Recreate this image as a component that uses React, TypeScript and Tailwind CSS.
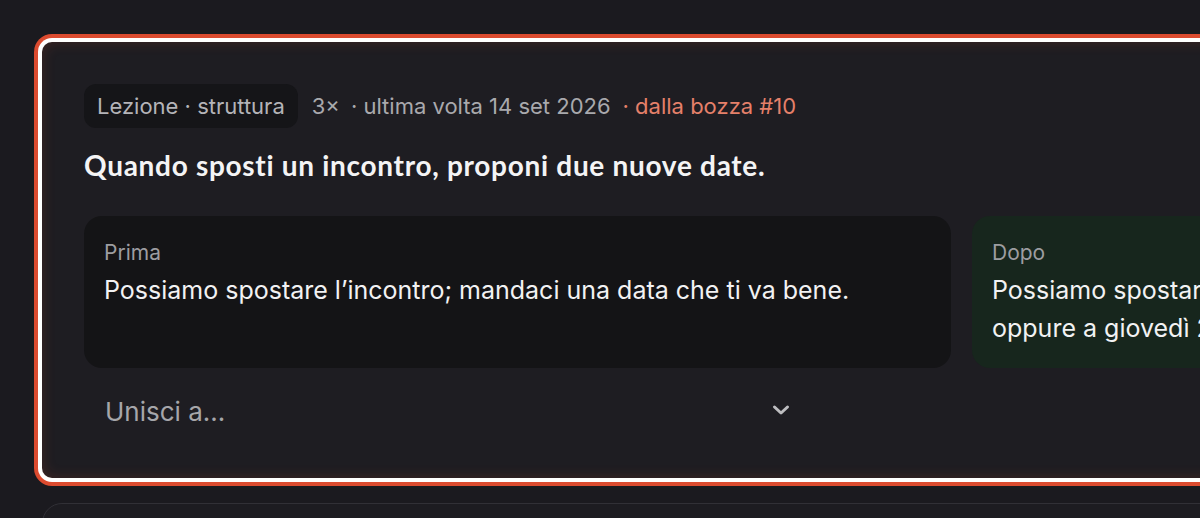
import React from 'react';

// Lesson card: focused, with before/after comparison and merge select
const LessonCard: React.FC = () => {
  return (
    <div className="w-[1839px] rounded-[10px] bg-[#1e1d22] px-[42px] pt-[42px] pb-[39px] shadow-[0_0_0_4px_#ffffff,0_0_0_8px_#dc4b2f,inset_0_0_14px_rgba(220,75,47,0.18)]">
      {/* Meta row */}
      <div className="flex items-center h-[44px] text-[22px] text-[#a9a9ad]">
        <span className="flex items-center h-[44px] px-[13px] rounded-[12px] bg-[#151518] text-[#b4b4b8]">
          Lezione · struttura
        </span>
        <span className="ml-[14px]">3×</span>
        <span className="ml-[11px]">· ultima volta 14 set 2026</span>
        <span className="ml-[12px] text-[#e5806a]">· dalla bozza #10</span>
      </div>

      {/* Lesson */}
      <h2 className="mt-[18px] text-[28px] leading-[38px] tracking-[0.7px] font-bold text-[#f4f4f5] font-['Lato',sans-serif]">
        Quando sposti un incontro, proponi due nuove date.
      </h2>

      {/* Before / after */}
      <div className="mt-[32px] grid grid-cols-2 gap-[21px]">
        <div className="rounded-[18px] bg-[#141416] px-[20px] pt-[22px] pb-[21px]">
          <div className="text-[21px] leading-[30px] text-[#9d9da1]">Prima</div>
          <p className="mt-[3px] text-[25px] leading-[38px] text-[#f2f2f3]">
            Possiamo spostare l’incontro; mandaci una data che ti va bene.
          </p>
        </div>
        <div className="rounded-[18px] bg-[#17261d] px-[20px] pt-[22px] pb-[21px]">
          <div className="text-[21px] leading-[30px] text-[#9d9da1]">Dopo</div>
          <p className="mt-[3px] text-[25px] leading-[38px] text-[#f2f2f3]">
            Possiamo spostare l’incontro a martedì 22 settembre alle 10:00, oppure a giovedì 24 alle 15:00. Quale preferisci?
          </p>
        </div>
      </div>

      {/* Merge select */}
      <div className="mt-[15px] flex items-center justify-between w-[720px] h-[56px] pl-[21px] pr-[14px] text-[26px] text-[#a6a6aa]">
        <span>Unisci a...</span>
        <svg width="18" height="12" viewBox="0 0 18 12" fill="none" className="text-[#bdbdc0] -mt-[2px]">
          <path d="M2.5 3 L9 9 L15.5 3" stroke="currentColor" strokeWidth="3" strokeLinecap="round" strokeLinejoin="round" />
        </svg>
      </div>
    </div>
  );
};

const App: React.FC = () => {
  return (
    <div className="w-[1200px] h-[518px] overflow-hidden bg-[#1b1a1f] font-['Inter',sans-serif]">
      <div className="w-[1923px] flex flex-col gap-[25px] pl-[42px] pt-[42px]">
        <LessonCard />
        <div className="w-[1839px] h-[160px] rounded-[20px] border border-[#313036] bg-[#1d1c21]" />
      </div>
    </div>
  );
};

export default App;
